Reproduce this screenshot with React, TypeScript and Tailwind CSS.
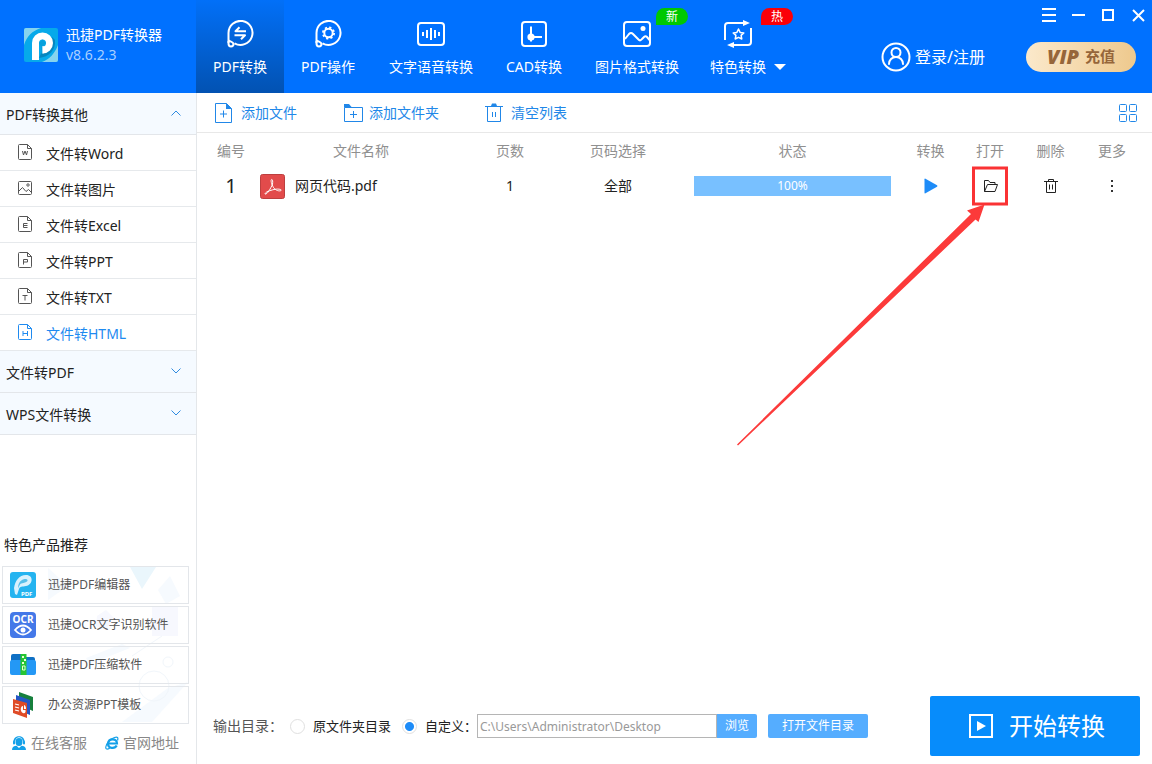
import { useState } from "react";
import type { ReactNode } from "react";

const FONT = "font-['Noto_Sans','Noto_Sans_CJK_SC',sans-serif]";

interface NavItem {
  label: string;
  width: string;
  icon: ReactNode;
  badge?: string;
  badgeCls?: string;
  caret?: boolean;
}

const NAV: NavItem[] = [
  {
    label: "PDF转换",
    width: "w-[88px]",
    icon: (
      <>
        <BubbleOutline />
        <path d="M20 11.200H9.500l4-4M8.500 15.200H19l-4 4" />
      </>
    ),
  },
  {
    label: "PDF操作",
    width: "w-[88px]",
    icon: (
      <>
        <BubbleOutline />
        <circle cx="14.500" cy="13" r="4.200" />
        <circle cx="14.500" cy="13" r="5.600" strokeWidth="1.800" strokeDasharray="2.2 2.2" />
      </>
    ),
  },
  {
    label: "文字语音转换",
    width: "w-[118px]",
    icon: (
      <>
        <rect x="1" y="3" width="26" height="22" rx="3" />
        <path d="M6 12v4M10 10v8M14 8v12M18 10v8M22 12v4" />
      </>
    ),
  },
  {
    label: "CAD转换",
    width: "w-[88px]",
    icon: (
      <>
        <rect x="2" y="2" width="24" height="24" rx="3" />
        <path d="M11 6.500v15M11 17h11" />
        <circle cx="11" cy="17" r="3.600" fill="currentColor" stroke="none" />
      </>
    ),
  },
  {
    label: "图片格式转换",
    width: "w-[118px]",
    badge: "新",
    badgeCls: "bg-[#00c800]",
    icon: (
      <>
        <rect x="1" y="2" width="26" height="24" rx="3" />
        <path d="M2 19l4-5q2-2 4 0l6 6q1.500 1 3-1l2-2q1.500-1.500 3 0l2.500 3" />
        <circle cx="20" cy="8.500" r="2.500" fill="currentColor" stroke="none" />
      </>
    ),
  },
  {
    label: "特色转换",
    width: "w-[105px]",
    badge: "热",
    badgeCls: "bg-[#fb0007]",
    caret: true,
    icon: (
      <>
        <path d="M1 20V6q0-3 3-3h17M27 8v14q0 3-3 3H7" />
        <path d="M19 0l7 3-7 3zM10 22l-7 3 7 3z" fill="currentColor" stroke="none" />
        <path
          d="M14.500 9l1.600 3.400 3.700.500-2.700 2.500.700 3.600-3.300-1.700-3.300 1.700.700-3.600-2.700-2.500 3.700-.500z"
          strokeWidth="1.500"
        />
      </>
    ),
  },
];

const FORMATS = [
  { letter: "W", label: "文件转Word" },
  { letter: "", label: "文件转图片" },
  { letter: "E", label: "文件转Excel" },
  { letter: "P", label: "文件转PPT" },
  { letter: "T", label: "文件转TXT" },
  { letter: "H", label: "文件转HTML" },
];

const PRODUCTS = [
  { label: "迅捷PDF编辑器", icon: <PdfEditorIcon /> },
  { label: "迅捷OCR文字识别软件", icon: <OcrIcon /> },
  { label: "迅捷PDF压缩软件", icon: <ZipIcon /> },
  { label: "办公资源PPT模板", icon: <SlidesIcon /> },
];

export default function App() {
  const [active, setActive] = useState("PDF转换");
  const [format, setFormat] = useState("文件转HTML");

  return (
    <div className={`flex min-h-screen flex-col bg-white text-sm text-[#222] ${FONT}`}>
      <header className="flex h-[93px] bg-[#0071ff] text-white">
        <div className="flex w-[196px] shrink-0 items-center gap-2 pb-[3px] pl-6">
          <LogoIcon />
          <div className="leading-5">
            <h1>迅捷PDF转换器</h1>
            <p className="text-[#a9d0ff]">v8.6.2.3</p>
          </div>
        </div>

        <nav className="flex">
          {NAV.map((item) => (
            <button
              key={item.label}
              type="button"
              onClick={() => setActive(item.label)}
              className={`relative flex shrink-0 items-start pt-5 ${item.width} ${
                item.caret ? "justify-start gap-2 pl-3.5" : "justify-center"
              } ${active === item.label ? "bg-linear-to-b from-[#0270f8] to-[#0252b2]" : ""}`}
            >
              <span className="flex flex-col items-center gap-[9px]">
                <svg
                  viewBox="0 0 28 28"
                  className="h-7 w-7"
                  fill="none"
                  stroke="currentColor"
                  strokeWidth="2"
                  strokeLinecap="butt"
                  strokeLinejoin="round"
                >
                  {item.icon}
                </svg>
                <span className="leading-5 whitespace-nowrap">{item.label}</span>
              </span>
              {item.caret && (
                <svg viewBox="0 0 12 6" className="mt-11 h-1.5 w-3 fill-current">
                  <path d="M0 0h12L6 6z" />
                </svg>
              )}
              {item.badge && (
                <span
                  className={`absolute top-2 right-2 h-[17px] w-8 rounded-full rounded-bl-none text-center text-xs leading-[17px] ${item.badgeCls}`}
                >
                  {item.badge}
                </span>
              )}
            </button>
          ))}
        </nav>

        <div className="ml-auto flex flex-col items-end">
          <div className="flex h-[30px] items-center gap-4 pr-1.5">
            <WindowButton label="菜单">
              <path d="M0 1h14M0 7h14M0 13h14" />
            </WindowButton>
            <WindowButton label="最小化">
              <path d="M0 7h13" />
            </WindowButton>
            <WindowButton label="最大化">
              <path d="M1 2h10v10H1z" />
            </WindowButton>
            <WindowButton label="关闭">
              <path d="M1 2l11 11M12 2L1 13" />
            </WindowButton>
          </div>
          <div className="mt-3 flex items-center gap-[41px] pr-4">
            <button type="button" className="flex items-center gap-1 text-base leading-6">
              <svg viewBox="0 0 30 30" className="h-[30px] w-[30px]" fill="none" stroke="currentColor" strokeWidth="2">
                <circle cx="15" cy="15" r="13.500" />
                <circle cx="15" cy="10.500" r="4.500" />
                <path d="M8 22c0-4 3-7 7-7s7 3 7 7" strokeLinecap="round" />
              </svg>
              登录/注册
            </button>
            <button
              type="button"
              className="flex h-[30px] w-[110px] items-center justify-center gap-1.5 rounded-full bg-linear-to-r from-[#fbe9cb] to-[#eec98d] text-[15px] font-bold text-[#96663a]"
            >
              <span className="font-['Open_Sans',sans-serif] text-xl leading-5 font-extrabold italic">VIP</span>
              充值
            </button>
          </div>
        </div>
      </header>

      <div className="flex flex-1">
        <aside className="flex w-[197px] shrink-0 flex-col border-r border-[#e4e7ea]">
          <GroupHeader label="PDF转换其他" open />
          {FORMATS.map((f) => (
            <button
              key={f.label}
              type="button"
              onClick={() => setFormat(f.label)}
              className={`flex h-9 items-center gap-3.5 border-b border-[#e6e9ec] pt-0.5 pl-[18px] text-left ${
                format === f.label ? "text-[#1e8af0]" : ""
              }`}
            >
              <FormatIcon letter={f.letter} />
              {f.label}
            </button>
          ))}
          <GroupHeader label="文件转PDF" />
          <GroupHeader label="WPS文件转换" />

          <section className="mt-auto pb-[11px]">
            <h2 className="mb-[11px] pl-1 leading-5">特色产品推荐</h2>
            <ul className="relative mr-[7px] ml-0.5 flex flex-col gap-0.5">
              <CardBackdrop />
              {PRODUCTS.map((p) => (
                <li key={p.label} className="relative border border-[#e3e6ea]">
                  <a href="#" className="flex h-9 items-center gap-3 pl-[7px] text-xs text-[#555]">
                    {p.icon}
                    {p.label}
                  </a>
                </li>
              ))}
            </ul>
            <div className="mt-[9px] flex items-center gap-[18px] pl-[11px] leading-5 text-[#888]">
              <a href="#" className="flex items-center gap-1">
                <SupportIcon />
                在线客服
              </a>
              <a href="#" className="flex items-center gap-1">
                <BrowserIcon />
                官网地址
              </a>
            </div>
          </section>
        </aside>

        <main className="flex min-w-0 flex-1 flex-col">
          <div className="flex h-10 items-center gap-[46px] border-b border-[#e8e8e8] pr-[15px] pl-[18px] text-[#2187e8]">
            <ToolButton label="添加文件">
              <path d="M.500.500h11l5 5v14H.500zM5 11h7M8.500 7.500v7" />
              <path d="M11 0l6 6h-6z" fill="currentColor" stroke="none" />
            </ToolButton>
            <ToolButton label="添加文件夹">
              <path d="M1.500 4.500h18v14h-18zM7 11.500h7M10.500 8v7" />
              <path d="M1 1h5l3 3.500H1z" fill="currentColor" stroke="none" />
            </ToolButton>
            <ToolButton label="清空列表">
              <path d="M0 3.500h18M2.500 3.500v15h13v-15M7.500 9v5M10.500 9v5" />
              <path d="M6 3l1-2.500h4L12 3z" fill="currentColor" stroke="none" />
            </ToolButton>
            <button type="button" aria-label="切换视图" className="ml-auto">
              <svg viewBox="0 0 18 18" className="h-[18px] w-[18px]" fill="none" stroke="currentColor">
                <rect x=".5" y=".5" width="7" height="7" rx="1" />
                <rect x="10.500" y=".5" width="7" height="7" rx="1" />
                <rect x=".5" y="10.500" width="7" height="7" rx="1" />
                <rect x="10.500" y="10.500" width="7" height="7" rx="1" />
              </svg>
            </button>
          </div>

          <table className="w-full table-fixed text-center">
            <thead className="text-[#909090]">
              <tr className="h-9">
                <th className="w-[60px] pl-2 font-normal">编号</th>
                <th className="w-[208px] font-normal">文件名称</th>
                <th className="w-[90px] font-normal">页数</th>
                <th className="w-[126px] font-normal">页码选择</th>
                <th className="font-normal">状态</th>
                <th className="w-[53px] font-normal">转换</th>
                <th className="w-[66px] font-normal">打开</th>
                <th className="w-[55px] font-normal">删除</th>
                <th className="w-[74px] pr-1.5 font-normal">更多</th>
              </tr>
            </thead>
            <tbody>
              <tr className="h-[34px]">
                <td className="pl-2 text-xl leading-5">1</td>
                <td>
                  <div className="flex items-center gap-2.5 pl-[3px]">
                    <PdfIcon />
                    网页代码.pdf
                  </div>
                </td>
                <td>1</td>
                <td>全部</td>
                <td className="px-[13px]">
                  <div className="h-5 bg-[#78c0ff] text-xs leading-5 text-white">100%</div>
                </td>
                <td>
                  <button type="button" aria-label="转换" className="block w-full">
                    <svg viewBox="0 0 14 16" className="mx-auto h-4 w-3.5 fill-[#1e8cf8]">
                      <path d="M1.500.700q-1-.500-1 .600v13.400q0 1.100 1 .600L13 8.700q1-.700 0-1.400z" />
                    </svg>
                  </button>
                </td>
                <td className="relative">
                  <button type="button" aria-label="打开" className="block w-full">
                    <svg viewBox="0 0 15 14" className="mx-auto h-3.5 w-[15px]" fill="none" stroke="#222" strokeLinejoin="round">
                      <path d="M1.500 12.500v-11h4l1.500 2h5v2M1.500 12.500l3-7h10l-2.500 7z" />
                    </svg>
                  </button>
                  <Highlight />
                </td>
                <td>
                  <button type="button" aria-label="删除" className="block w-full">
                    <svg viewBox="0 0 14 16" className="mx-auto h-4 w-3.5" fill="none" stroke="#222">
                      <path d="M0 3.500h14M4.500 3.500v-2h5v2M2.500 3.500v11h9v-11M5.500 6.500v5M8.500 6.500v5" />
                    </svg>
                  </button>
                </td>
                <td className="pr-1.5">
                  <button type="button" aria-label="更多" className="block w-full">
                    <svg viewBox="0 0 2 12" className="mx-auto h-3 w-0.5 fill-[#333]">
                      <path d="M0 0h2v2H0zM0 5h2v2H0zM0 10h2v2H0z" />
                    </svg>
                  </button>
                </td>
              </tr>
            </tbody>
          </table>

          <footer className="mt-auto flex items-center pr-3 pb-2 pl-4 text-[13px]">
            <span className="w-[77px] text-sm text-[#555]">输出目录：</span>
            <label className="flex items-center gap-2">
              <OutputRadio />
              原文件夹目录
            </label>
            <label className="ml-[11px] flex items-center gap-2">
              <OutputRadio checked />
              自定义：
            </label>
            <input
              type="text"
              aria-label="输出目录"
              defaultValue="C:\Users\Administrator\Desktop"
              className="h-6 w-60 border border-[#b5b5b5] px-0.5 text-xs text-[#999] outline-none"
            />
            <button type="button" className="h-6 w-10 rounded-r-xs bg-[#55adff] text-xs text-white">
              浏览
            </button>
            <button type="button" className="ml-[11px] h-6 w-[100px] rounded-xs bg-[#55adff] text-xs text-white">
              打开文件目录
            </button>
            <button
              type="button"
              className="ml-auto flex h-[60px] w-[210px] items-center justify-center gap-4 rounded-xs bg-[#078cfb] pl-1 text-2xl text-white"
            >
              <svg viewBox="0 0 24 24" className="h-6 w-6" fill="none" stroke="currentColor" strokeWidth="2">
                <rect x="1" y="1" width="22" height="22" />
                <path d="M8 7l9 5-9 5z" fill="currentColor" stroke="none" />
              </svg>
              开始转换
            </button>
          </footer>
        </main>
      </div>
    </div>
  );
}

function WindowButton({ label, children }: { label: string; children: ReactNode }) {
  return (
    <button type="button" aria-label={label}>
      <svg viewBox="0 0 14 14" className="h-3.5 w-3.5" fill="none" stroke="currentColor" strokeWidth="2">
        {children}
      </svg>
    </button>
  );
}

function ToolButton({ label, children }: { label: string; children: ReactNode }) {
  return (
    <button type="button" className="flex items-center gap-1.5">
      <svg viewBox="0 0 20 20" className="h-5 w-5" fill="none" stroke="currentColor">
        {children}
      </svg>
      {label}
    </button>
  );
}

function GroupHeader({ label, open }: { label: string; open?: boolean }) {
  return (
    <button
      type="button"
      className="flex h-[42px] items-center justify-between border-b border-[#e3e6ea] bg-[#f5faff] pt-0.5 pr-[15px] pl-1.5"
    >
      {label}
      <svg viewBox="0 0 10 6" className="mb-1 h-1.5 w-2.5" fill="none" stroke="#2f8be0">
        <path d={open ? "M.5 5.500L5 1l4.500 4.500" : "M.5.500L5 5 9.500.500"} />
      </svg>
    </button>
  );
}

function OutputRadio({ checked }: { checked?: boolean }) {
  return (
    <input
      type="radio"
      name="output"
      defaultChecked={checked}
      className="h-[15px] w-[15px] appearance-none rounded-full border border-[#e0e0e0] bg-white checked:bg-[radial-gradient(circle,#1e8cf8_4px,transparent_5px)]"
    />
  );
}

// Red frame and pointer drawn over the "open" column
function Highlight() {
  return (
    <div className="pointer-events-none absolute top-1/2 left-1/2 h-[39px] w-9 -translate-1/2 border-3 border-[#fa3234]">
      <svg
        viewBox="0 0 250 242"
        className="absolute top-[35px] right-[18px] h-[242px] w-[250px] max-w-none fill-[#fc3a3a]"
      >
        <path d="M247.500 0L230 6l4 3.500L0 240l1 1L238.500 15l3 2.500z" />
      </svg>
    </div>
  );
}

function BubbleOutline() {
  return (
    <>
      <path d="M2.500 23V13A12 12 0 1 1 8.500 23.300" />
      <path d="M2.500 21v2.500c0 4 5 3.500 5 .500 0-1.800-2.500-2.500-5-3.500" />
    </>
  );
}

function FormatIcon({ letter }: { letter: string }) {
  const glyphs: Record<string, string> = {
    W: "M4.500 7l1 4 1.500-4 1.500 4 1-4",
    E: "M9.500 7.500h-4v4h4M5.500 9.500h4",
    P: "M5.500 12.500v-5h4v2.500h-4",
    T: "M4.500 7.500h5M7 7.500v5",
    H: "M5 7v5M9.500 7v5M5 9.500h4.500",
  };
  return (
    <svg
      viewBox="0 0 14 16"
      className={`mb-1 h-4 w-3.5 shrink-0 ${letter === "H" ? "" : "text-[#555]"}`}
      fill="none"
      stroke="currentColor"
    >
      {letter ? (
        <>
          <path d="M1.500.500h8l4 4v10q0 1-1 1h-11q-1 0-1-1v-13q0-1 1-1zM9.500.500v4h4" />
          <path d={glyphs[letter]} />
        </>
      ) : (
        <>
          <rect x=".5" y="1.500" width="13" height="13" rx="1" />
          <path d="M1 11l3.500-3.500 3.500 4 2.500-2 3 3" />
          <circle cx="10" cy="5" r="1.200" />
        </>
      )}
    </svg>
  );
}

function LogoIcon() {
  return (
    <svg viewBox="0 0 34 34" className="h-[34px] w-[34px] shrink-0">
      <rect width="34" height="34" rx="2" fill="#06a9ea" />
      <path d="M2 0h15C8 3 3 8 0 17V2q0-2 2-2zM34 17v15q0 2-2 2H18c8-3 13-9 16-17z" fill="#86d3ee" />
      <path d="M15 30c10-1 17-8 16-18l-3-3-10 14z" fill="#0586bf" />
      <path d="M11.500 32V15a7 7 0 1 1 7 7" fill="none" stroke="#fff" strokeWidth="7" />
      <path d="M15 15l3.500-3.500L22 15l-3.500 3.500v7H17v-7z" fill="#06a0dc" />
      <path d="M18.500 18h1v7.500h-1z" fill="#fff" />
    </svg>
  );
}

function PdfIcon() {
  return (
    <svg viewBox="0 0 25 25" className="h-[25px] w-[25px]" fill="none">
      <rect x=".5" y=".5" width="24" height="24" rx="2" fill="#e24b4b" stroke="#bd3f3f" />
      <path
        d="M5 20c2 1 6-6 7.500-10C13 7 12.500 5 11.500 5.500s0 5 2 8 6 4 7.500 3-3-2-7-1-9 2.500-9 4.500z"
        stroke="#fff"
        strokeWidth="1"
      />
    </svg>
  );
}

// Pale shapes printed behind the product cards
function CardBackdrop() {
  return (
    <svg viewBox="0 0 187 158" className="absolute inset-0 h-full w-full" fill="#f6fafe">
      <path d="M46 2l20 18-20 14zM156 24l12-14 10 20-14 8z" />
      <path d="M128 1h26l-14 22z" fill="#eaf6fc" />
      <path d="M95 50l9-6 8 8-8 12-10-4zM150 40h26v30h-26z" fill="#f7f8fe" />
      <path d="M84 92l36-14 8 4-40 16zM120 156l46-34 20-6-36 40z" />
      <g fill="none" stroke="#f1f6fb">
        <circle cx="152" cy="120" r="15" />
        <circle cx="166" cy="96" r="5" />
        <path d="M130 90l30-20" />
      </g>
    </svg>
  );
}

function PdfEditorIcon() {
  return (
    <svg viewBox="0 0 26 26" className="h-[26px] w-[26px]">
      <rect width="26" height="26" rx="3" fill="#25b4f0" />
      <path
        d="M4 16C5 9 9 3 16 3c8 0 7 10 0 11-4 1-6 0-7 3l-2 6-2-1z"
        fill="#d8f1fd"
      />
      <path d="M12 8c5-3 8 1 3 2.500s-4 0-7 6c0-4 1-6.500 4-8.500z" fill="#58bfe9" />
      <text x="11" y="23.500" fontSize="6" fontWeight="700" fill="#fff">
        PDF
      </text>
    </svg>
  );
}

function OcrIcon() {
  return (
    <svg viewBox="0 0 26 26" className="h-[26px] w-[26px]">
      <rect width="26" height="26" rx="4" fill="#4478e8" />
      <text x="13" y="10.500" fontSize="10" fontWeight="700" textAnchor="middle" fill="#fff">
        OCR
      </text>
      <path d="M5 18q8-9 16 0-8 9-16 0z" fill="none" stroke="#fff" strokeWidth="1.800" />
      <circle cx="13" cy="18" r="2.500" fill="#fff" />
    </svg>
  );
}

function ZipIcon() {
  return (
    <svg viewBox="0 0 26 26" className="h-[26px] w-[26px]">
      <path d="M3 2h10l3 3h7q2 0 2 2v12H1V4q0-2 2-2z" fill="#0f70c4" />
      <rect y="8" width="26" height="15" rx="2" fill="#2498f5" />
      <path d="M10.500 2h6v21h-6z" fill="#25c533" />
      <path d="M12 4h2v2h-2zM14 7h2v2h-2zM12 10h2v2h-2z" fill="#e9ffd5" />
      <path d="M12.500 14h2.500v4h-2.500z" fill="none" stroke="#e9ffd5" />
    </svg>
  );
}

function SlidesIcon() {
  return (
    <svg viewBox="0 0 26 26" className="h-[26px] w-[26px]">
      <path d="M9 0l14 5v14L9 13z" fill="#17803d" />
      <path d="M6 3l14 5v15L6 17z" fill="#2457c5" />
      <path d="M3 7l14 4v15L3 21z" fill="#df4b27" />
      <path d="M5 12l4 1M5 15l4 1M5 18l4 1" stroke="#fff" strokeWidth="1.200" />
      <path d="M13 14c-3 0-3 6 0 7 2 1 3-1 2.500-3H13z" fill="#fff" />
      <path d="M14 13c1.500.500 2 2 2 4h-2z" fill="#fff" />
    </svg>
  );
}

function SupportIcon() {
  return (
    <svg viewBox="0 0 16 14" className="h-3.5 w-4" fill="#14a0e8">
      <path d="M2.500 5.500C2.500-1.500 13.500-1.500 13.500 5.500H12C11-.200 5-.200 4 5.500z" />
      <rect x="2" y="4.500" width="2" height="4" rx="1" />
      <rect x="12" y="4.500" width="2" height="4" rx="1" />
      <ellipse cx="8" cy="6" rx="3.500" ry="4" />
      <path d="M1 14c0-3 2-4 4.500-4.200L8 12l2.500-2.200C13 10 15 11 15 14z" />
    </svg>
  );
}

function BrowserIcon() {
  return (
    <svg viewBox="0 0 14 14" className="h-3.5 w-3.5" fill="none" stroke="#14a0e8">
      <path d="M3 7.500h9C12 2 3.500 2 3 7.500c0 5.500 7 5.500 8.700 2" strokeWidth="2.200" />
      <path d="M12.500 4.500c1-3 0-4-3-3C5 3 1.500 7.500.800 11c-.300 2.500 1.500 2.500 4 1.200" strokeWidth="1.200" />
    </svg>
  );
}
